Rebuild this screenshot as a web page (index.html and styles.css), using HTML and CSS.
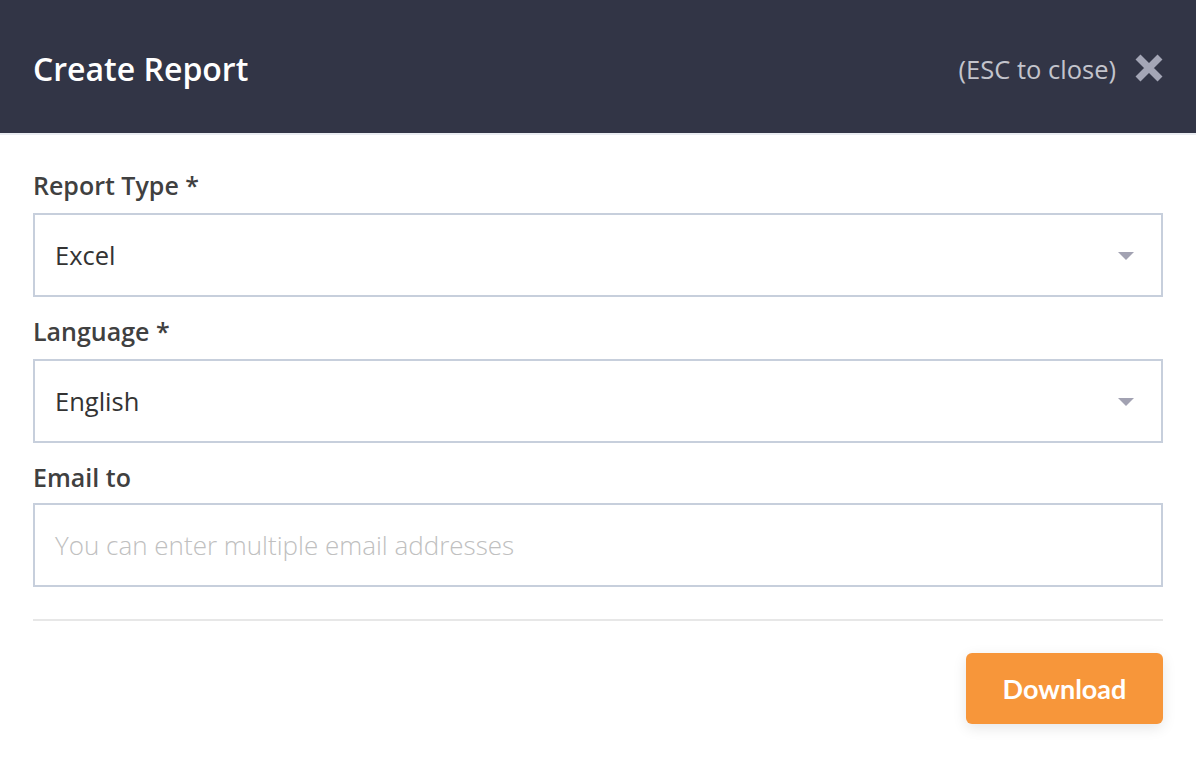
FILE: index.html
```html
<!DOCTYPE html>
<html lang="en">
<head>
<meta charset="utf-8">
<title>Create Report</title>
<link rel="stylesheet" href="styles.css">
</head>
<body>
<div class="modal">
  <header class="modal-header">
    <h1 class="modal-title">Create Report</h1>
    <div class="close-area">
      <span class="esc-hint">(ESC to close)</span>
      <svg class="close-icon" width="32" height="32" viewBox="0 0 32 32" aria-hidden="true">
        <path d="M5 5 L27 27 M27 5 L5 27" stroke="#a4a6b6" stroke-width="7" stroke-linecap="butt" fill="none"/>
      </svg>
    </div>
  </header>
  <form class="modal-body">
    <div class="field">
      <label class="field-label">Report Type *</label>
      <div class="select-box">
        <span class="select-value">Excel</span>
        <span class="caret"></span>
      </div>
    </div>
    <div class="field">
      <label class="field-label">Language *</label>
      <div class="select-box">
        <span class="select-value">English</span>
        <span class="caret"></span>
      </div>
    </div>
    <div class="field field-last">
      <label class="field-label">Email to</label>
      <div class="text-box">
        <span class="placeholder">You can enter multiple email addresses</span>
      </div>
    </div>
    <hr class="divider">
    <div class="actions">
      <button type="button" class="btn-download">Download</button>
    </div>
  </form>
</div>
</body>
</html>
```
FILE: styles.css
```css
* { box-sizing: border-box; }
html, body {
  margin: 0;
  padding: 0;
  background: #ffffff;
  font-family: "Open Sans", "Liberation Sans", sans-serif;
}
.modal {
  width: 1196px;
  height: 766px;
  background: #fff;
}
.modal-header {
  height: 135px;
  background: #323546;
  border-bottom: 2px solid #e9ecf1;
  display: flex;
  align-items: center;
  justify-content: space-between;
  padding: 4px 31px 0 33px;
}
.modal-title {
  margin: 0;
  color: #ffffff;
  font-size: 32px;
  font-weight: 600;
  line-height: 40px;
}
.close-area {
  display: flex;
  align-items: center;
  gap: 17px;
}
.esc-hint {
  color: #c3c4cc;
  font-size: 25.5px;
  line-height: 32px;
}
.close-icon { display: block; margin-top: -2px; }
.modal-body {
  padding: 34px 33px 0 33px;
  display: flex;
  flex-direction: column;
}
.field {
  display: flex;
  flex-direction: column;
  margin-bottom: 18px;
}
.field-label {
  color: #404040;
  font-size: 25px;
  font-weight: 600;
  line-height: 32px;
  margin-bottom: 12px;
}
.field-last .field-label { margin-bottom: 10px; }
.select-box, .text-box {
  height: 84px;
  border: 2px solid #c7cfdc;
  display: flex;
  align-items: center;
  padding: 0 27px 0 20px;
  justify-content: space-between;
}
.select-value {
  color: #333333;
  font-size: 25.5px;
}
.placeholder {
  color: #c0c0c0;
  font-size: 26px;
  font-weight: 300;
}
.caret {
  width: 0;
  height: 0;
  border-left: 8px solid transparent;
  border-right: 8px solid transparent;
  border-top: 8px solid #a2a2b2;
  margin-top: 2px;
}
.divider {
  border: none;
  border-top: 2px solid #e7e7e7;
  margin: 14px 0 32px 0;
  height: 0;
}
.actions {
  display: flex;
  justify-content: flex-end;
}
.btn-download {
  width: 197px;
  height: 71px;
  background: #f7963a;
  color: #ffffff;
  border: none;
  border-radius: 6px;
  font-family: "Lato", "Open Sans", sans-serif;
  font-size: 27px;
  font-weight: 700;
  box-shadow: 0 4px 14px rgba(0, 0, 0, 0.10);
  padding: 0;
}
```
